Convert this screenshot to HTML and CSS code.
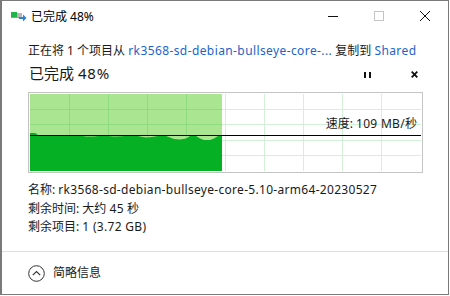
FILE: index.html
```html
<!DOCTYPE html>
<html lang="zh-CN">
<head>
<meta charset="utf-8">
<link rel="stylesheet" href="styles.css">
</head>
<body>
<div class="window">
  <div class="titlebar">
    <svg class="app-icon" width="16" height="12" viewBox="0 0 16 12">
      <rect x="0" y="1" width="6" height="5" fill="#1fb34a"/>
      <rect x="6" y="2" width="5" height="4" fill="#b8b8b8"/>
      <rect x="0" y="6" width="11" height="1" fill="#9a9a9a"/>
      <path d="M8 6h4V3.5L15.5 7 12 10.5V8H8z" fill="#2d7fd6"/>
    </svg>
    <span class="title">已完成 48%</span>
    <div class="caption">
      <div class="cbtn"><svg width="10" height="10" viewBox="0 0 10 10"><path d="M0 5.5h10" stroke="#111" stroke-width="1"/></svg></div>
      <div class="cbtn"><svg width="10" height="10" viewBox="0 0 10 10"><rect x="0.5" y="0.5" width="9" height="9" fill="none" stroke="#c4c4c4"/></svg></div>
      <div class="cbtn"><svg width="10" height="10" viewBox="0 0 10 10"><path d="M0 0L10 10M10 0L0 10" stroke="#111" stroke-width="1"/></svg></div>
    </div>
  </div>
  <div class="content">
    <div class="line1">正在将 1 个项目从 <span class="link lat">rk3568-sd-debian-bullseye-core-...</span> 复制到 <span class="link lat">Shared</span></div>
    <div class="status">
      <span class="pct">已完成 <span class="pnum">48%</span></span>
      <div class="ctrls">
        <svg class="pause" width="7" height="6" viewBox="0 0 7 6"><rect x="0" y="0" width="2" height="6" fill="#111"/><rect x="5" y="0" width="2" height="6" fill="#111"/></svg>
        <svg class="stop" width="7" height="7" viewBox="0 0 7 7"><path d="M0.7 0.7L6.3 6.3M6.3 0.7L0.7 6.3" stroke="#111" stroke-width="1.8"/></svg>
      </div>
    </div>
    <div class="graph">
      <svg width="391" height="77" viewBox="0 0 391 77">
        <rect x="0" y="0" width="192" height="77" fill="#aae592"/>
        <g stroke="#d3f1d7" stroke-width="1">
          <path d="M195.5 0V77M234.5 0V77M273.5 0V77M312.5 0V77M351.5 0V77"/>
          <path d="M192 15.5H391M192 30.5H391M192 46.5H391M192 61.5H391"/>
        </g>
        <g stroke="#8fdb7d" stroke-width="1">
          <path d="M39.5 0V77M78.5 0V77M117.5 0V77M156.5 0V77"/>
          <path d="M0 15.5H192M0 30.5H192M0 46.5H192M0 61.5H192"/>
        </g>
        <path d="M0 39 L5 39 L7 40 L8 41.5 L50 41.5 L56 42.5 L64 42.5 L70 41.8 L78 42 L84 42.5 L92 42.3 L96 41.5 L106 41.5 L110 42.5 L116 43.5 L122 43 L128 42 L136 42 L140 43.5 L144 45 L150 45.5 L156 44.5 L160 42 L166 42 L170 44.5 L174 46 L180 46 L184 44.5 L188 42 L192 41.5 L192 77 L0 77 Z" fill="#06b025"/>
        <path d="M0 41.5H391" stroke="#000" stroke-width="1"/>
      </svg>
      <span class="speed">速度: <span class="lat">109 MB/</span>秒</span>
    </div>
    <div class="details">
      <div>名称: <span class="lat">rk3568-sd-debian-bullseye-core-5.10-arm64-20230527</span></div>
      <div>剩余时间: 大约 <span class="lat">45</span> 秒</div>
      <div>剩余项目: <span class="lat">1 (3.72 GB)</span></div>
    </div>
  </div>
  <div class="footer">
    <svg class="more" width="17" height="17" viewBox="0 0 17 17"><circle cx="8.5" cy="8.5" r="7.8" fill="none" stroke="#333" stroke-width="1"/><path d="M4.8 10.2L8.5 6.5L12.2 10.2" fill="none" stroke="#333" stroke-width="1.1"/></svg>
    <span class="more-label">简略信息</span>
  </div>
</div>
</body>
</html>
```

FILE: styles.css
```css
html, body {
  margin: 0;
  padding: 0;
  background: #ffffff;
}
body {
  width: 450px;
  height: 296px;
  font-family: "Noto Sans", "Noto Sans CJK SC", sans-serif;
  color: #1a1a1a;
  overflow: hidden;
}
.window {
  box-sizing: border-box;
  width: 449px;
  height: 295px;
  border: 1px solid #7a7a7a;
  border-left-width: 2px;
  display: flex;
  flex-direction: column;
  background: #fff;
}
.titlebar {
  height: 30px;
  display: flex;
  align-items: center;
  flex-shrink: 0;
}
.app-icon {
  margin-left: 9px;
  margin-top: 2px;
}
.title {
  margin-left: 4px;
  font-size: 12px;
  line-height: 14px;
  margin-top: 2px;
  color: #000;
}
.caption {
  margin-left: auto;
  display: flex;
  height: 30px;
}
.cbtn {
  width: 46px;
  height: 30px;
  display: flex;
  align-items: center;
  justify-content: center;
}
.content {
  padding: 10px 25px 0 26px;
  display: flex;
  flex-direction: column;
}
.line1 {
  font-size: 12px;
  line-height: 20px;
  white-space: nowrap;
}
.lat {
  letter-spacing: 0.3px;
}
.line1 .lat {
  letter-spacing: 0.4px;
}
.link {
  color: #1a64c8;
}
.status {
  display: flex;
  align-items: center;
  height: 24px;
}
.pct {
  font-size: 15px;
  line-height: 22px;
  margin-left: 1px;
}
.pnum {
  letter-spacing: 0.8px;
}
.ctrls {
  margin-left: auto;
  display: flex;
  align-items: center;
  gap: 39px;
  margin-right: 5px;
  margin-top: 3px;
}
.pause {
  margin-right: 1px;
}
.graph {
  position: relative;
  margin-top: 7px;
  width: 393px;
  height: 79px;
  border: 1px solid #c4c4c4;
  padding: 0;
  box-sizing: content-box;
  flex-shrink: 0;
}
.graph svg {
  display: block;
  margin: 1px;
}
.speed {
  position: absolute;
  right: 5px;
  top: 24px;
  font-size: 12px;
  line-height: 14px;
  color: #1a1a1a;
}
.details {
  margin-top: 8px;
  font-size: 12px;
  line-height: 18.5px;
  white-space: nowrap;
}
.footer {
  margin-top: auto;
  height: 42px;
  border-top: 1px solid #dedede;
  display: flex;
  align-items: center;
  padding-left: 26px;
}
.more-label {
  margin-left: 8px;
  font-size: 12px;
  line-height: 16px;
}
```
